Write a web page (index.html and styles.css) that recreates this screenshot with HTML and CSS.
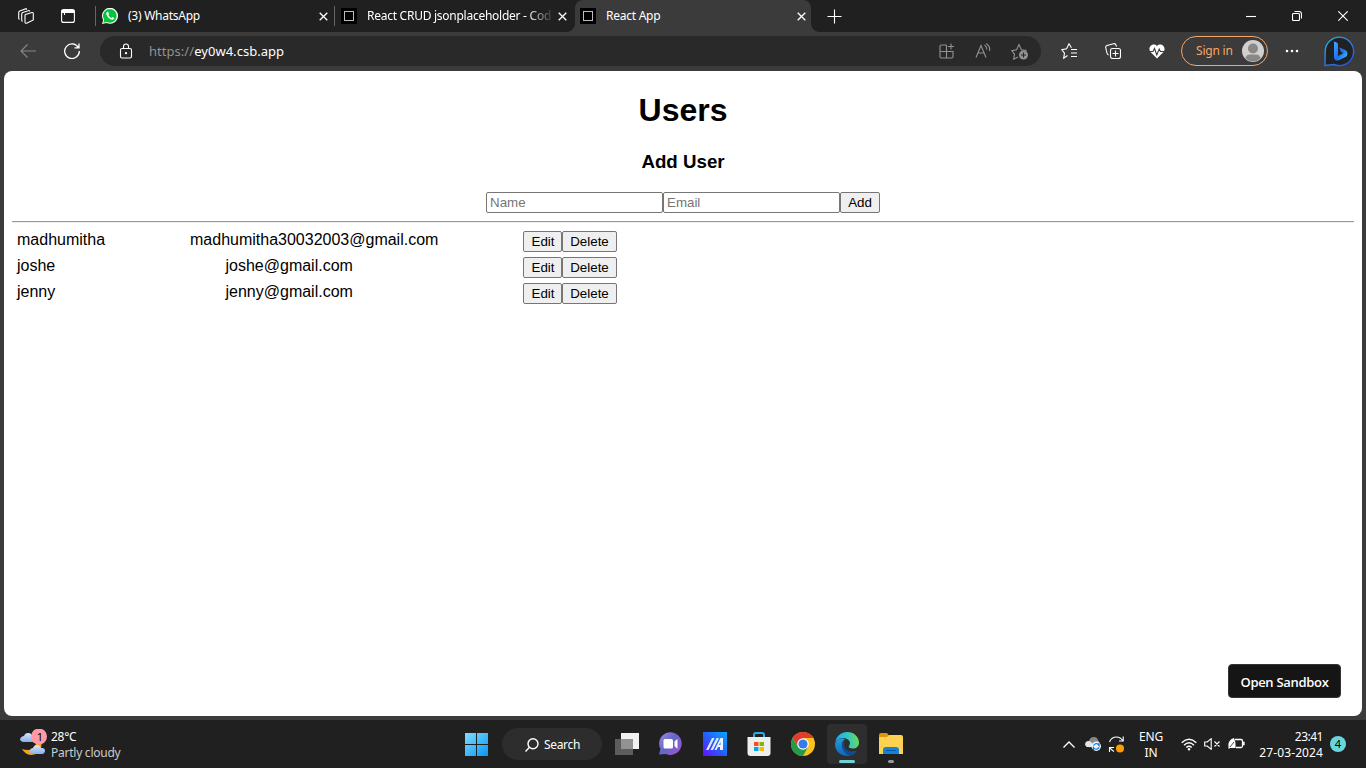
FILE: index.html
```html
<!DOCTYPE html>
<html lang="en">
<head>
<meta charset="utf-8">
<title>React App</title>
<link rel="stylesheet" href="styles.css">
</head>
<body>
<div class="tabstrip">
  <svg class="ic workspaces" width="16" height="16" viewBox="0 0 16 16"><path d="M7.500 6.500 14 4.500Q15.300 4.300 15.300 5.500V12L8.700 15.300Q7 15.500 7 14V7.500Q7 6.800 7.500 6.500ZM4.500 13.500Q3.700 13 3.700 12V6Q3.700 5 4.700 4.500L11 2.500 12 3.300M1.500 11.500Q.7 11 .7 10V4.500Q.7 3.300 1.700 2.900L8 .700 9 1.500"/></svg>
  <svg class="ic tabmenu" width="14" height="14" viewBox="0 0 14 14"><rect x=".6" y=".6" width="12.800" height="12.800" rx="2"/><path d="M1 1.500h12v2H1z" fill="#fff"/><path d="M3.500 4v2"/></svg>
  <div class="tab tab-chat">
    <svg width="16" height="16" viewBox="0 0 16 16"><path d="M0 16 1.200 12A8 8 0 1 1 4.500 15Z" fill="#fff"/><path d="M1.300 14.700 2.200 11.800A6.800 6.800 0 1 1 4.700 14Z" fill="#00c737"/><path d="M5 4c-1 .7-1.200 2 .3 4.200 1.600 2.400 4 4 5.600 3.500 1.300-.5 1.500-1.500 1.200-1.900l-1.800-.9c-.5 0-.7 1-1.200 1-.8-.2-2.300-1.600-2.700-2.600 0-.5.700-.8.6-1.300L6.300 4.200C6 3.800 5.400 3.800 5 4Z" fill="#fff"/></svg>
    <span class="title">(3) WhatsApp</span>
    <svg class="ic x" width="9" height="9" viewBox="0 0 9 9"><path d="m.7.7 7.600 7.600M8.300.7.700 8.300"/></svg>
  </div>
  <div class="tab tab-code">
    <span class="favicon"></span>
    <span class="title fade">React CRUD jsonplaceholder - Cod</span>
    <svg class="ic x" width="9" height="9" viewBox="0 0 9 9"><path d="m.7.7 7.600 7.600M8.300.7.700 8.300"/></svg>
  </div>
  <div class="tab active">
    <span class="favicon"></span>
    <span class="title">React App</span>
    <svg class="ic x" width="9" height="9" viewBox="0 0 9 9"><path d="m.7.7 7.600 7.600M8.300.7.700 8.300"/></svg>
  </div>
  <svg class="ic plus" width="15" height="15" viewBox="0 0 15 15"><path d="M7.500.5v14M.5 7.500h14"/></svg>
  <div class="window-buttons">
    <svg class="ic" width="10" height="10" viewBox="0 0 10 10"><path d="M0 5.500h10"/></svg>
    <svg class="ic" width="10" height="10" viewBox="0 0 10 10"><rect x=".5" y="2.500" width="7" height="7" rx="1"/><path d="M2.500.5H7Q9.500.5 9.500 3v4.500"/></svg>
    <svg class="ic" width="10" height="10" viewBox="0 0 10 10"><path d="m.3.3 9.400 9.400M9.700.3.300 9.700"/></svg>
  </div>
</div>

<div class="toolbar">
  <svg class="ic back" width="16" height="14" viewBox="0 0 16 14"><path d="M16 7H1M7.500.5 1 7l6.500 6.500"/></svg>
  <svg class="ic reload" width="16" height="16" viewBox="0 0 16 16"><path d="M14.300 4.500A7.300 7.300 0 1 0 15.300 8M15 .500v4.300h-4.500"/></svg>
  <div class="address">
    <svg class="ic lock" width="14" height="16" viewBox="0 0 14 16"><rect x="1.500" y="5.500" width="11" height="9.500" rx="1.500"/><path d="M4.500 5.500V3.500a2.500 2.500 0 0 1 5 0v2"/><circle cx="7" cy="10.200" r=".6" fill="#fff"/></svg>
    <span class="url"><span class="scheme">https://</span>ey0w4.csb.app</span>
    <div class="address-icons">
      <svg class="ic" width="16" height="16" viewBox="0 0 16 16"><path d="M7.500 2H2.500Q1 2 1 3.500v10Q1 15 2.500 15H12.500Q14 15 14 13.500V8.500H1M7.500 2v13M12 .5v6M9 3.500h6"/></svg>
      <svg class="ic" width="16" height="16" viewBox="0 0 16 16"><path d="m1 14.500 5-12 5 12M3 10h6M9.500 2Q12 3.500 11.800 6.500M11 .5Q15.500 3 14.500 8"/></svg>
      <svg class="ic" width="18" height="17" viewBox="0 0 18 17"><path d="m7 14-4.300 2.200.8-5L.7 7.600l4.900-.8L8 1.500l2.400 5.200 5.300.8"/><circle cx="12.500" cy="12" r="4.500" fill="#929292" stroke="none"/><path d="M12.500 9.500v5M10 12h5" stroke="#292929"/></svg>
    </div>
  </div>
  <div class="actions">
    <svg class="ic" width="16" height="16" viewBox="0 0 16 16"><path d="m6.500 12.500-3.800 2.700.8-5L.7 6.600l4.900-.8L8 .8l2.400 4M10 6.500h6M10 10h6M10 13.500h6"/></svg>
    <svg class="ic" width="16" height="16" viewBox="0 0 16 16"><rect x="5.500" y="5.500" width="10" height="10" rx="2"/><path d="M10.500 7.500v6M7.500 10.500h6M3.500 12Q2 11 1.700 9L.700 4.500Q.5 3 2 2.500L8.500.700Q10.500.300 11 2l.5 1.500"/></svg>
    <svg width="16" height="15" viewBox="0 0 16 15"><path d="M8 14.500 1.500 8C-2 3.500 4-2 8 2c4-4 10 1.500 6.500 6Z" fill="#fff"/><path d="M0 7.500h4l1.500-3 2.300 6.500 2.400-6 1.200 2.500H16" fill="none" stroke="#3b3b3b" stroke-width="1.100"/></svg>
  </div>
  <div class="signin"><span>Sign in</span><svg width="22" height="22" viewBox="0 0 22 22"><circle cx="11" cy="11" r="11" fill="#d2d0ce"/><circle cx="11" cy="8.500" r="5" fill="#8a8886"/><path d="M3.500 18.500Q4 14.500 8 14.500h6q4 0 4.500 4a11 11 0 0 1-15 0Z" fill="#8a8886"/></svg></div>
  <svg class="more" width="14" height="4" viewBox="0 0 14 4"><g fill="#fff"><circle cx="2" cy="2" r="1.300"/><circle cx="7" cy="2" r="1.300"/><circle cx="12" cy="2" r="1.300"/></g></svg>
  <svg class="bing" width="31" height="31" viewBox="0 0 31 31">
    <defs><linearGradient id="ring" x1="0" y1="0" x2=".7" y2="1"><stop offset="0" stop-color="#28b3df"/><stop offset="1" stop-color="#2458e8"/></linearGradient><linearGradient id="bee" x1="0" y1="0" x2="1" y2="1"><stop offset="0" stop-color="#3fa8ff"/><stop offset=".55" stop-color="#1d6df5"/><stop offset="1" stop-color="#42d4ed"/></linearGradient></defs>
    <path d="M1 29.500 1.200 15A14.200 14.200 0 1 1 10 28.500Z" fill="#202123" stroke="url(#ring)" stroke-width="1.400"/><path d="M10 5.500 12.700 6.500Q14 7 14 8.500V20l5.500-3-2.500-1.300-1.700-4.200 6 2.500q2.200 1 2.200 3.500 0 2.300-2 3.500L14.500 24.300Q10 25.500 10 20.500Z" fill="url(#bee)"/>
  </svg>
</div>

<main class="page">
  <h1>Users</h1>
  <h3>Add User</h3>
  <form class="add-form"><input type="text" placeholder="Name"><input type="text" placeholder="Email"><button type="button">Add</button></form>
  <hr>
  <div class="users">
    <div class="user"><span class="name">madhumitha</span><span class="email long">madhumitha30032003@gmail.com</span><button>Edit</button><button>Delete</button></div>
    <div class="user"><span class="name">joshe</span><span class="email">joshe@gmail.com</span><button>Edit</button><button>Delete</button></div>
    <div class="user"><span class="name">jenny</span><span class="email">jenny@gmail.com</span><button>Edit</button><button>Delete</button></div>
  </div>
  <div class="sandbox">Open Sandbox</div>
</main>

<div class="taskbar">
  <div class="weather">
    <svg width="28" height="30" viewBox="0 0 28 30"><defs><linearGradient id="cloud" x1="0" y1="0" x2="0" y2="1"><stop offset="0" stop-color="#dae7fb"/><stop offset="1" stop-color="#86afea"/></linearGradient></defs><path d="M17 9q6 4 4 10-3 7-10 7-6-.5-9-6 9 3 13-3 2-3 2-8Z" fill="#f6a21a"/><path d="M3 13q-4-1-2.500-4Q2 7 4 7q1-3 4-3 4 0 4.500 4Q16 9 15 12l-1 1Z" fill="url(#cloud)"/><path d="M12 25q-3-1-2-4 1-2 3-2 1-3 4-3t4 3q4-.5 4 3-.5 3-3 3Z" fill="url(#cloud)"/><circle cx="19" cy="7.500" r="8" fill="#ff99a4"/><text x="20" y="11.500" text-anchor="middle" class="badge-text">1</text></svg>
    <div class="weather-text"><span>28°C</span><span class="dim">Partly cloudy</span></div>
  </div>
  <div class="apps">
    <svg width="23" height="23" viewBox="0 0 23 23"><defs><linearGradient id="win" x1="0" y1="0" x2="1" y2="1"><stop offset="0" stop-color="#7fdcff"/><stop offset="1" stop-color="#0795f5"/></linearGradient></defs><path d="M0 0h11v11H0zM12 0h11v11H12zM0 12h11v11H0zM12 12h11v11H12z" fill="url(#win)"/></svg>
    <div class="search"><svg class="ic" width="14" height="14" viewBox="0 0 14 14"><circle cx="8" cy="5.700" r="5" stroke-width="1.400"/><path d="M4.500 9.300.500 13.500" stroke-width="1.400"/></svg><span>Search</span></div>
    <svg class="taskview" width="24" height="22" viewBox="0 0 24 22"><path d="M6 0h18v16H6z" fill="#f1f1f1"/><path d="M0 6h18v16H0z" fill="#5d5d5d"/><path d="M6 6h12v10H6z" fill="#929292"/></svg>
    <svg class="chat" width="24" height="24" viewBox="0 0 24 24"><defs><linearGradient id="cg" x1="0" y1="0" x2="1" y2=".8"><stop offset="0" stop-color="#a48bdc"/><stop offset=".5" stop-color="#6267c9"/><stop offset="1" stop-color="#9858cf"/></linearGradient></defs><path d="M0 22.500 1.500 17A11.300 11.300 0 1 1 7 22Z" fill="url(#cg)"/><rect x="4.500" y="7" width="9.500" height="9.500" rx="1.500" fill="#fff"/><path d="M15.500 9.500Q18 7 18.500 7v9.500Q18 16.500 15.500 14Z" fill="#fff"/></svg>
    <svg class="armoury" width="24" height="24" viewBox="0 0 24 24"><defs><linearGradient id="ag" x1="0" y1="1" x2="1" y2="0"><stop stop-color="#640fff"/><stop offset=".5" stop-color="#2461fb"/><stop offset="1" stop-color="#08a7ff"/></linearGradient></defs><path d="M0 0h24v24H0z" fill="url(#ag)"/><path d="M3 18 9 6h2.500L5.500 18ZM7.500 18l6-12H16l-6 12Z" fill="#dfe9ff"/><path d="m11.500 18 6-12H20v12h-3v-3h-2l-1.500 3ZM16 13h1.500v-3Z" fill="#eef5ff"/></svg>
    <svg class="store" width="24" height="24" viewBox="0 0 24 24"><path d="M7 6V3q0-2 2-2h6q2 0 2 2v3" fill="none" stroke="#2aace8" stroke-width="2"/><path d="M.5 5h23v16q0 3-3 3h-17q-3 0-3-3Z" fill="#eee"/><path d="M7 10h4.500v4H7z" fill="#f25022"/><path d="M12.500 10H17v4h-4.500z" fill="#7fba00"/><path d="M7 15h4.500v4H7z" fill="#00a4ef"/><path d="M12.500 15H17v4h-4.500z" fill="#ffb900"/></svg>
    <svg class="chrome" width="24" height="24" viewBox="0 0 24 24"><circle cx="12" cy="12" r="12" fill="#fcc31e"/><path d="M1.600 6A12 12 0 0 1 22.400 6H12L7 15Z" fill="#e33b2e"/><path d="M1.600 6A12 12 0 0 0 12 24l5-9-5 2-5-2Z" fill="#249a4b"/><circle cx="12" cy="12" r="5.800" fill="#fff"/><circle cx="12" cy="12" r="4.600" fill="#377be9"/></svg>
    <div class="edge"><svg width="24" height="24" viewBox="0 0 24 24"><defs><linearGradient id="eg" x1="0" y1=".4" x2="1" y2=".3"><stop stop-color="#25a8e8"/><stop offset=".5" stop-color="#2bc7cc"/><stop offset="1" stop-color="#6edb4f"/></linearGradient><linearGradient id="eb" x1="0" y1="0" x2="0" y2="1"><stop stop-color="#1b9de1"/><stop offset="1" stop-color="#1463b9"/></linearGradient></defs><path d="M.3 11C1 4 6 0 12.300 0 19 0 24 5 24 10.500c0 4-3 6-6 6s-5-1-4-2.500c3-4-1-8-6-8-4 0-7 2-7.700 5Z" fill="url(#eg)"/><path d="M.2 11C2 6 7 5 10 7.500c-4 2-4 7-1 10s8 3 12.500 1.500C18 24 12 25 7.500 23 2 20.500-.5 16 .2 11Z" fill="url(#eb)"/><path d="M10 8.500Q5.500 11 7.500 16.500q2 5 6.500 7.200 4-.700 7.500-4.700-7 2-10.500-2-3.500-3.500-1-8.500Z" fill="#114a91"/></svg><i></i></div>
    <div class="folder"><svg width="24" height="24" viewBox="0 0 24 24"><path d="M0 3q0-2 2-2h6l2 2.500V6H0Z" fill="#dc9606"/><path d="M0 5h8l2-2h12q2 0 2 2v17H0Z" fill="#ffd150"/><path d="M4 22v-4q0-3 3-3h10q3 0 3 3v4Z" fill="#1682d5"/><path d="M7 18.500h10" stroke="#0757a7"/></svg><i></i></div>
  </div>
  <div class="tray">
    <svg class="ic" width="12" height="7" viewBox="0 0 12 7"><path d="m.5 6.500 5.500-5.500 5.500 5.500" stroke-width="1.300"/></svg>
    <svg class="onedrive" width="16" height="14" viewBox="0 0 16 14"><path d="M2 10Q-1 8 1 5q1-1 3-1 1-4 5-4 3 0 4 3l2 3v5Z" fill="#888"/><path d="M1 5q3-2 5 0l5 5H2Q-1 8 1 5Z" fill="#e5e5e5"/><circle cx="11.300" cy="9.300" r="4.700" fill="#e9f5ff"/><path d="M8.500 8.500q3-4 5.500 0V6M14 10.500q-3 3.500-5.500 0V13" fill="none" stroke="#0c73d0" stroke-width="1.200"/></svg>
    <svg class="ic sync" width="17" height="17" viewBox="0 0 17 17"><path d="M1.500 6q2-5 7-5 4 0 6.500 4M15.200.5V5H11M6 15.500Q3 14 2 11.500M1.500 16v-4.500H6"/><circle cx="12" cy="12.500" r="4" fill="#ff9b05" stroke="none"/></svg>
    <div class="lang"><span>ENG</span><span>IN</span></div>
    <svg class="ic wifi" width="16" height="13" viewBox="0 0 16 13"><path d="M.7 4.700q7.300-7 14.600 0M3 7.200q5-4.700 10 0M5.300 9.500q2.700-2.500 5.400 0" stroke-width="1.400"/><circle cx="8" cy="11.300" r="1.200" fill="#fff" stroke="none"/></svg>
    <svg class="ic speaker" width="16" height="12" viewBox="0 0 16 12"><path d="M.7 4v4h2.500l4 3.300V.7L3.200 4ZM10.500 3.500l5 5M15.500 3.500l-5 5"/></svg>
    <svg class="ic battery" width="17" height="12" viewBox="0 0 17 12"><path d="M7 1.500h6q1.500 0 1.500 1.500v5q0 1.500-1.500 1.500H8M15 4.500h1v2h-1" stroke-width="1.300"/><path d="M.5 9Q-.5 2 6 0q2 4 1.500 10H2L.5 11Z" fill="#fff" stroke="none"/><path d="m2 9 4-5" stroke="#202020" stroke-width=".8"/></svg>
    <div class="clock"><span>23:41</span><span class="date">27-03-2024</span></div>
    <div class="count">4</div>
  </div>
</div>
</body>
</html>
```
FILE: styles.css
```css
* { box-sizing: border-box; }
body { margin: 0; width: 1366px; height: 768px; overflow: hidden; background: #3b3b3b; color: #fff; font: 12px/16px "Noto Sans", "Open Sans", sans-serif; display: flex; flex-direction: column; }
svg { display: block; flex: none; }
.ic { fill: none; stroke: #fff; stroke-width: 1.1; }
i { display: block; }

.tabstrip { height: 32px; background: #202020; display: flex; align-items: center; padding-left: 18px; }
.tabmenu { margin-left: 27px; margin-right: 20px; }
.tab { position: relative; height: 32px; display: flex; align-items: center; padding-left: 6px; }
.tab-chat { width: 239px; padding-left: 7px; }
.tab-code { width: 241px; padding-left: 7px; }
.tab-chat::before, .tab-code::before { content: ""; position: absolute; left: 0; top: 6px; width: 1px; height: 20px; background: #666; }
.title { margin-left: 10px; white-space: nowrap; letter-spacing: -.25px; }
.tab .x { margin-left: auto; stroke-width: 1.3; }
.tab-chat .x { margin-right: 6px; }
.tab-code .x { margin-right: 8px; }
.fade { width: 185px; letter-spacing: -.26px; -webkit-mask-image: linear-gradient(90deg, #000 160px, transparent 188px); mask-image: linear-gradient(90deg, #000 160px, transparent 188px); }
.favicon { flex: none; width: 16px; height: 16px; background: #000; display: flex; align-items: center; justify-content: center; }
.favicon::after { content: ""; width: 8px; height: 8px; border: 1px solid #bbb; }
.active { width: 236px; background: #3b3b3b; border-radius: 8px 8px 0 0; padding-left: 5px; }
.active .x { margin-right: 5px; }
.active::before, .active::after { content: ""; position: absolute; bottom: 0; width: 8px; height: 8px; }
.active::before { left: -8px; background: radial-gradient(circle at 0 0, transparent 7.500px, #3b3b3b 8px); }
.active::after { right: -8px; background: radial-gradient(circle at 100% 0, transparent 7.500px, #3b3b3b 8px); }
.plus { margin-left: 16px; }
.window-buttons { margin-left: auto; padding-right: 18px; display: flex; gap: 36px; }

.toolbar { height: 39px; padding: 0 11px 1px 20px; display: flex; align-items: center; }
.back { stroke: #888; }
.reload { margin-left: 28px; stroke-width: 1.3; }
.address { width: 941px; flex: none; height: 30px; margin-left: 20px; border-radius: 15px; background: #292929; display: flex; align-items: center; padding: 0 12px 0 19px; }
.url { margin-left: 16px; font-size: 13px; letter-spacing: .04px; }
.scheme { color: #929292; }
.address-icons { margin-left: auto; display: flex; align-items: center; gap: 20px; }
.address-icons .ic { stroke: #929292; }
.actions { display: flex; align-items: center; gap: 28px; margin-left: 20px; }
.signin { width: 87px; height: 30px; margin-left: 16px; border: 1px solid #f5a66a; border-radius: 15px; color: #f5a66a; display: flex; align-items: center; justify-content: space-between; padding: 0 3px 0 14px; white-space: nowrap; letter-spacing: -.2px; }
.more { margin-left: 17px; }
.bing { margin-left: 25px; }

.page { position: relative; height: 645px; margin: 0 4px; padding: 0 8px; background: #fff; border-radius: 8px; color: #000; font: 16px/18px "Liberation Sans", Arial, sans-serif; }
h1, h3 { text-align: center; font-weight: bold; }
h1 { margin: 0; padding-top: 21px; font-size: 32px; line-height: 37px; }
h3 { margin: 22px 0 0; font-size: 18.72px; line-height: 22px; }
.add-form { display: flex; justify-content: center; margin: 19px 0 0; }
input { width: 177px; height: 21px; margin: 0; padding: 1px 3px; border: 1px solid #767676; border-radius: 2px; font: 13.333px "Liberation Sans", Arial, sans-serif; }
input::placeholder { color: #757575; }
button { height: 21px; margin: 0; padding: 1px 7px; border: 1px solid #767676; border-radius: 2px; background: #efefef; color: #000; font: 13.333px "Liberation Sans", Arial, sans-serif; }
.add-form button { width: 40px; }
hr { height: 2px; margin: 8px 0; border: 0; border-top: 1px solid #9a9a9a; border-bottom: 1px solid #eee; }
.users { display: flex; flex-direction: column; gap: 5px; padding-left: 5px; }
.user { display: flex; height: 21px; }
.name { width: 173px; }
.email { width: 333px; padding-left: 35.5px; }
.email.long { padding-left: 0; }
.user button { width: 55px; padding: 0; }
.user .email + button { width: 39px; padding-left: 1px; }
.sandbox { position: absolute; right: 21px; bottom: 18px; width: 113px; height: 34px; border-radius: 4px; background: #151515; border: 1px solid #343434; color: #fff; font: 600 13px/34px "Open Sans", sans-serif; letter-spacing: -.3px; text-align: center; white-space: nowrap; }

.taskbar { height: 48px; margin-top: 4px; background: #202020; display: flex; align-items: center; }
.weather { width: 465px; padding-left: 20px; display: flex; align-items: center; gap: 3px; }
.weather-text { display: flex; flex-direction: column; padding-top: 2px; letter-spacing: -.25px; }
.dim { color: #ccc; }
.badge-text { font-size: 11px; fill: #000; }
.apps { width: 598px; display: flex; align-items: center; }
.search { width: 100px; height: 32px; margin-left: 14px; border-radius: 16px; background: #2d2d2d; display: flex; align-items: center; justify-content: center; gap: 5px; padding: 1px 0 0 1px; letter-spacing: -.3px; }
.taskview { margin-left: 13px; }
.chat, .armoury, .store, .chrome { margin-left: 20px; }
.edge { width: 40px; height: 40px; margin-left: 12px; border-radius: 4px; background: #2e2e2e; display: flex; flex-direction: column; align-items: center; padding-top: 8px; }
.edge i { width: 16px; height: 3px; margin-top: 4px; border-radius: 2px; background: #70d0d8; }
.folder { height: 40px; margin-left: 12px; padding-top: 8px; display: flex; flex-direction: column; align-items: center; }
.folder i { width: 6px; height: 3px; margin-top: 4px; border-radius: 2px; background: #999; }
.tray { display: flex; align-items: center; }
.onedrive { margin-left: 10px; }
.sync { margin-left: 7px; }
.lang { width: 28px; margin-left: 12px; display: flex; flex-direction: column; align-items: center; padding-top: 2px; letter-spacing: -.2px; }
.wifi { margin-left: 16px; }
.speaker { margin-left: 7px; }
.battery { margin-left: 8px; }
.clock { width: 78px; padding-top: 1px; display: flex; flex-direction: column; align-items: flex-end; letter-spacing: -.5px; }
.date { letter-spacing: .1px; }
.count { width: 16px; height: 16px; margin-left: 7px; border-radius: 50%; background: #6bd5dc; color: #000; font-size: 11px; text-align: center; }
```
